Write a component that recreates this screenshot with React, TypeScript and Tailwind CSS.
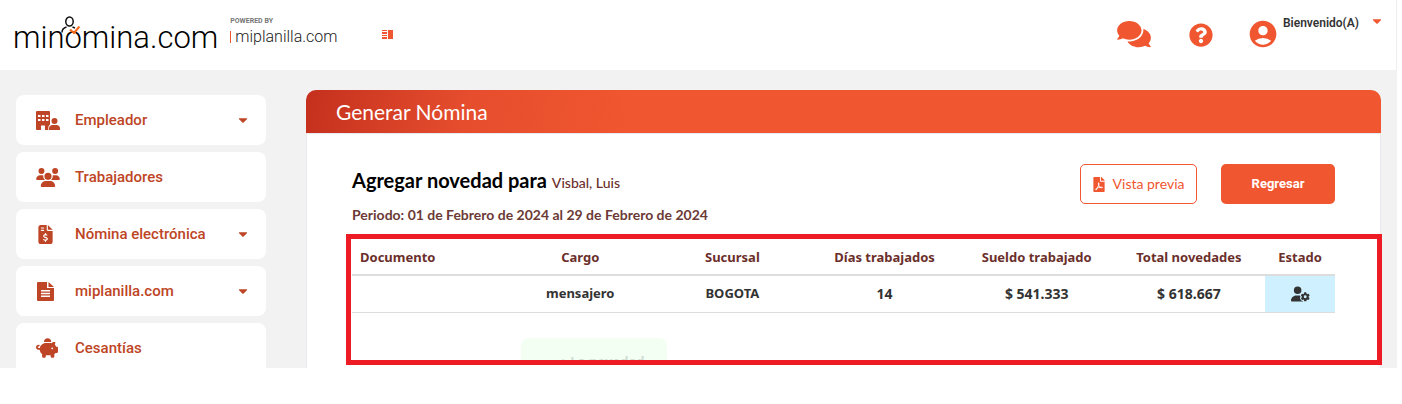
import type { ReactNode } from "react";
import { FaFileInvoiceDollar, FaPiggyBank, FaUserGear, FaUsers } from "react-icons/fa6";
import { FaCaretDown, FaComments, FaFilePdf, FaQuestionCircle } from "react-icons/fa";
import { MdAccountCircle } from "react-icons/md";

type MenuItem = {
  label: string;
  icon: ReactNode;
  expandable?: boolean;
};

function EmployerIcon() {
  return (
    <svg viewBox="0 0 24 19" className="h-[19px] w-6" fill="currentColor">
      <path
        fillRule="evenodd"
        d="M1 0h12a1 1 0 0 1 1 1v12.500c-1 .8-1.700 2-1.700 3.500v2H9v-4.500H5V19H1a1 1 0 0 1-1-1V1a1 1 0 0 1 1-1zM2 4v2h2.500V4zm4 0v2h2.500V4zm4 0v2h2.500V4zM2 8v2h2.500V8zm4 0v2h2.500V8zm4 0v2h2.500V8z"
      />
      <circle cx="18.500" cy="10" r="3" />
      <path d="M13 19v-1.500c0-2 1.500-3.500 3.500-3.500h4c2 0 3.500 1.500 3.500 3.500V19z" />
    </svg>
  );
}

function DocumentIcon() {
  return (
    <svg viewBox="0 0 17 19" className="ml-px h-[19px] w-[17px]" fill="currentColor">
      <path
        fillRule="evenodd"
        d="M1 0h9v6h7v12a1 1 0 0 1-1 1H1a1 1 0 0 1-1-1V1a1 1 0 0 1 1-1zM4 8v1.600h9V8zm0 2.700v1.600h9v-1.600zm0 2.700V15h9v-1.600z"
      />
      <path d="M11.500 0L17 5h-5.500z" />
    </svg>
  );
}

const MENU: MenuItem[] = [
  { label: "Empleador", icon: <EmployerIcon />, expandable: true },
  { label: "Trabajadores", icon: <FaUsers className="h-[19px] w-6" /> },
  {
    label: "Nómina electrónica",
    icon: <FaFileInvoiceDollar className="ml-0.5 h-[19px] w-[15px]" />,
    expandable: true,
  },
  { label: "miplanilla.com", icon: <DocumentIcon />, expandable: true },
  { label: "Cesantías", icon: <FaPiggyBank className="h-5 w-[22px]" /> },
];

const COLUMNS = [
  { title: "Documento", value: "" },
  { title: "Cargo", value: "mensajero" },
  { title: "Sucursal", value: "BOGOTA" },
  { title: "Días trabajados", value: "14", numeric: true },
  { title: "Sueldo trabajado", value: "$ 541.333", numeric: true },
  { title: "Total novedades", value: "$ 618.667", numeric: true },
];

function Logo() {
  return (
    <a
      href="#"
      className="relative block font-['Roboto','Liberation_Sans',sans-serif] text-[31px] leading-10 font-light text-black"
    >
      minomina.com
      <svg
        viewBox="0 0 20 18"
        className="absolute -top-0.5 left-[47px] h-[18px] w-5"
        fill="none"
        strokeWidth="1.5"
      >
        <ellipse cx="9.500" cy="5.500" rx="3.700" ry="4.500" stroke="#111" />
        <path d="M2 16.500c0-3 1-4.500 4.500-5.500M12.500 11l2.500 1" stroke="#111" />
        <path d="M10 13.500l4 3.500 5.500-6.500" stroke="#f96b1f" strokeWidth="2.200" />
      </svg>
    </a>
  );
}

function Header() {
  return (
    <header className="flex h-[70px] items-start border-r border-[#eeeeee] bg-white pl-[13px]">
      <div className="pt-[18px]">
        <Logo />
      </div>
      <div className="ml-3 flex flex-col pt-4">
        <span className="font-['Roboto',sans-serif] text-[7px] leading-[10px] font-bold text-[#777777]">
          POWERED BY
        </span>
        <a
          href="#"
          className="flex items-center gap-1 font-['Roboto','Liberation_Sans',sans-serif] text-base leading-[22px] font-light text-[#222222]"
        >
          <span className="h-3 w-px bg-[#f0562f]" />
          miplanilla.com
        </a>
      </div>
      <button type="button" aria-label="Contraer menú" className="mt-[30px] ml-[45px] text-[#f0562f]">
        <svg viewBox="0 0 12 9" className="h-[9px] w-3" fill="currentColor">
          <path d="M0 0h5v1H0zM0 2h5v2H0zM0 5h5v1H0zM0 7h5v2H0zM6 0h5v9H6z" />
        </svg>
      </button>

      <div className="ml-auto flex items-start pr-3 text-[#f0562f]">
        <button type="button" aria-label="Chat" className="mt-[19px]">
          <FaComments className="h-[30px] w-[34px]" />
        </button>
        <button type="button" aria-label="Ayuda" className="mt-[23px] ml-[38px]">
          <FaQuestionCircle className="size-6" />
        </button>
        <button type="button" className="ml-[34px] flex items-start">
          <MdAccountCircle className="mt-[18px] size-8" />
          <span className="mt-4 ml-1 font-['Roboto',sans-serif] text-xs leading-[14px] font-semibold text-[#333333]">
            Bienvenido(A)
          </span>
          <FaCaretDown className="mt-[14px] ml-[11px] size-[14px]" />
        </button>
      </div>
    </header>
  );
}

function Sidebar() {
  return (
    <nav className="flex w-[250px] shrink-0 flex-col gap-[7px] pt-[5px] font-['Roboto',sans-serif]">
      {MENU.map((item) => (
        <a
          key={item.label}
          href="#"
          className="flex h-[50px] shrink-0 items-center rounded-lg bg-white pr-4 pl-5 text-[#be4525]"
        >
          <span className="flex w-6 items-center">{item.icon}</span>
          <span className="ml-[15px] text-[15px] font-medium">{item.label}</span>
          {item.expandable && <FaCaretDown className="ml-auto size-[14px]" />}
        </a>
      ))}
    </nav>
  );
}

function PayrollTable() {
  return (
    <table className="w-full table-fixed font-['Noto_Sans',sans-serif] text-[13px] font-bold">
      <thead>
        <tr className="h-9 border-b-2 border-[#dddddd] text-[#6b2f2b]">
          {COLUMNS.map((col, i) => (
            <th key={col.title} className={i === 0 ? "px-2 pt-0.5 text-left" : "pt-0.5"}>
              {col.title}
            </th>
          ))}
          <th className="w-[70px] pt-0.5">Estado</th>
        </tr>
      </thead>
      <tbody>
        <tr className="h-[37px] border-b border-[#dddddd] text-center text-[#333333]">
          {COLUMNS.map((col) => (
            <td key={col.title} className={col.numeric ? "text-sm" : ""}>
              {col.value}
            </td>
          ))}
          <td className="bg-[#cff0ff]">
            <button type="button" aria-label="Ver estado" className="block w-full">
              <FaUserGear className="mx-auto h-4 w-[19px]" />
            </button>
          </td>
        </tr>
      </tbody>
    </table>
  );
}

export default function App() {
  return (
    <div className="mr-[5px] overflow-hidden bg-[#f2f2f2]">
      <Header />
      <div className="flex max-h-[298px] gap-10 px-4 pt-5">
        <Sidebar />

        <main className="relative min-w-0 grow">
          <div className="rounded-t-[10px] bg-linear-100 from-[#c5301e] via-[#e54d2d] via-15% to-[#f0562f] to-30% px-[30px] py-1 font-['Lato',sans-serif] text-[21px] leading-[35px] text-white">
            <h1>Generar Nómina</h1>
          </div>

          <section className="border-x border-t border-[#e6e9ee] bg-white px-[45px] pt-[30px] pb-[3px]">
            <div className="flex items-start font-['Lato',sans-serif]">
              <div>
                <h2 className="text-xl leading-8 font-bold text-black">
                  Agregar novedad para{" "}
                  <span className="text-sm font-medium text-[#6b2f2b]">Visbal, Luis</span>
                </h2>
                <p className="mt-[7px] text-sm leading-6 font-bold text-[#6b3a36]">
                  Periodo: 01 de Febrero de 2024 al 29 de Febrero de 2024
                </p>
              </div>
              <div className="ml-auto flex gap-6">
                <button
                  type="button"
                  className="flex h-10 w-[117px] items-center justify-center gap-2 rounded-[5px] border border-[#f0562f] text-sm text-[#f0562f]"
                >
                  <FaFilePdf className="h-[15px] w-3" />
                  Vista previa
                </button>
                <button
                  type="button"
                  className="h-10 w-[114px] rounded-[5px] bg-[#f0562f] font-['Roboto',sans-serif] text-[13px] font-bold text-white"
                >
                  Regresar
                </button>
              </div>
            </div>

            <div className="mt-3 h-[126px] overflow-hidden">
              <PayrollTable />
              <button
                type="button"
                className="mt-[25px] ml-[169px] h-12 w-[146px] rounded-lg bg-[#f3fff3] pl-4 font-['Noto_Sans',sans-serif] text-[13px] font-bold text-[#d3dcd3]"
              >
                + La novedad
              </button>
            </div>
          </section>

          {/* Highlighted area */}
          <div className="pointer-events-none absolute -right-px bottom-[3px] left-10 h-[131px] border-[5px] border-[#ed1c24]" />
        </main>
      </div>
    </div>
  );
}
